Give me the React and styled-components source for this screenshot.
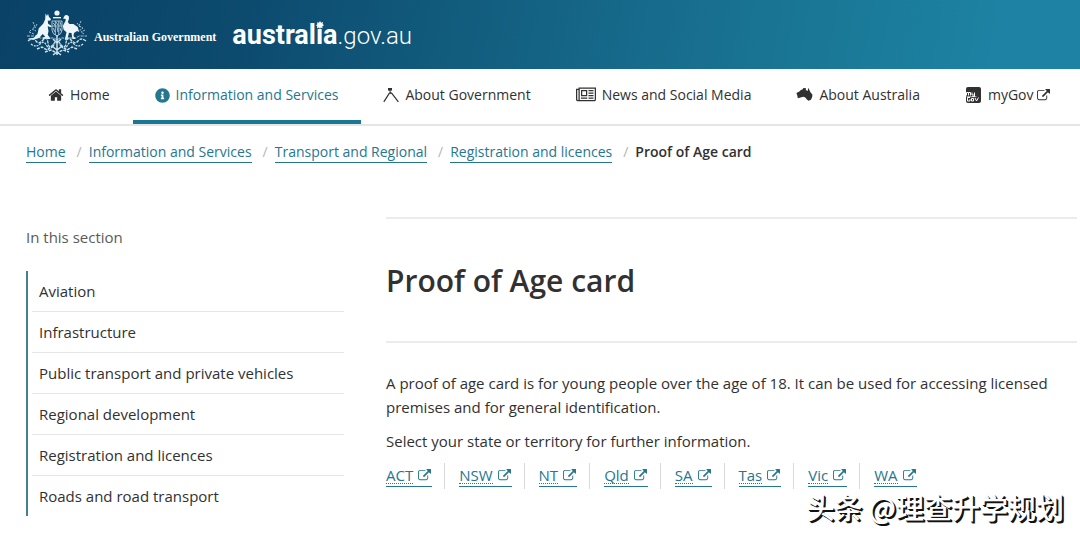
import styled, { createGlobalStyle } from "styled-components"
import { FaInfoCircle } from "react-icons/fa"

const GlobalStyle = createGlobalStyle`
  * {
    box-sizing: border-box;
  }
  body {
    margin: 0;
    background: #fff;
    color: #313131;
    font-family: "Open Sans", sans-serif;
    font-size: 15px;
    line-height: 24px;
  }
  a {
    color: inherit;
    text-decoration: none;
  }
  ul, ol {
    list-style: none;
    margin: 0;
    padding: 0;
  }
`

const Page = styled.div`
  position: relative;
  min-height: 100vh;
`

const Header = styled.header`
  display: flex;
  align-items: center;
  height: 69px;
  padding: 0 26px 4px;
  background: linear-gradient(100deg, #094266 0%, #0c4a6e 22%, #115a7c 40%, #176b8c 60%, #1a7896 76%, #1d82a3 92%);
`

const Crest = styled.a`
  display: flex;
  align-items: center;
  gap: 6px;
  margin-right: 16px;
  color: #fff;
  font: bold 12px/20px "Liberation Serif", serif;
`

const CrestName = styled.span`
  padding-top: 8px;
`

const Brand = styled.a`
  display: flex;
  align-items: baseline;
  padding-top: 6px;
  color: #fff;
  font: 700 27px/32px Roboto, sans-serif;
`

const BrandLight = styled.span`
  font-size: 24px;
  font-weight: 300;
`

const StarLetter = styled.span`
  position: relative;
`

const StarIcon = styled.svg`
  position: absolute;
  left: 0;
  top: 2px;
`

const Nav = styled.nav`
  border-bottom: 2px solid #e6e6e6;
  font-size: 14px;
  white-space: nowrap;
`

const NavList = styled.ul`
  display: flex;
  padding-left: 26px;
`

const NavLink = styled.a`
  display: flex;
  align-items: center;
  gap: 6px;
  height: 55px;
  padding: 1px 23px 0 22px;
  border-bottom: 4px solid ${props => props.$active ? "#1b7796" : "transparent"};
  color: ${props => props.$active ? "#24778f" : "#313131"};
`

const NavLabel = styled.span`
  display: flex;
  align-items: center;
  gap: 3px;
`

const Crumbs = styled.ol`
  display: flex;
  padding: 14px 26px;
  font-size: 14px;
`

const Crumb = styled.li`
  & + &::before {
    content: "/";
    padding: 0 7px 0 11px;
    color: #b5b5b5;
  }
`

const CrumbLink = styled.a`
  display: inline-block;
  line-height: 20px;
  border-bottom: 1px solid #24778f;
  color: #24778f;
`

const Current = styled.strong`
  font-weight: 600;
`

const Main = styled.div`
  display: grid;
  grid-template-columns: 318px minmax(0, 1fr);
  column-gap: 42px;
  padding: 39px 3px 0 26px;
`

const SideTitle = styled.h2`
  margin: 8px 0 22px;
  color: #5a5a5a;
  font-size: 15px;
  font-weight: 400;
  line-height: 24px;
`

const SideList = styled.ul`
  border-left: 2px solid #46808f;
  padding-left: 4px;
`

const SideItem = styled.li`
  & + & {
    border-top: 1px solid #e6e6e6;
  }
`

const SideLink = styled.a`
  display: block;
  padding: 8px 7px;
`

const Title = styled.h1`
  margin: 0 0 28px;
  padding: 42px 0 40px;
  border-top: 2px solid #ececec;
  border-bottom: 2px solid #ececec;
  font-size: 30px;
  font-weight: 600;
  line-height: 40px;
`

const Text = styled.p`
  margin: 0 0 10px;
`

const States = styled.ul`
  display: flex;
`

const State = styled.li`
  height: 26px;
  padding-right: 12px;
  & + & {
    padding-left: 14px;
    border-left: 1px solid #d9d9d9;
  }
`

const StateLink = styled.a`
  display: inline-flex;
  align-items: center;
  gap: 5px;
  height: 22px;
  padding-right: 1px;
  border-bottom: 1px solid #24778f;
  color: #24778f;
`

const Abbr = styled.abbr`
  line-height: 16px;
  border-bottom: 1px dotted #24778f;
  text-decoration: none;
`

const Watermark = styled.div`
  position: absolute;
  right: 16px;
  top: 487px;
  color: #fff;
  font: 500 28px/40px "Noto Sans CJK SC", sans-serif;
  text-shadow: 1px 1px 0 #111, 2px 2px 0 #111;
  white-space: nowrap;
`

const HomeIcon = () => (
  <svg width="16" height="16" viewBox="0 0 1792 1792" fill="currentColor">
    <path d="M1472 992v480q0 26-19 45t-45 19h-384v-384h-256v384h-384q-26 0-45-19t-19-45v-480q0-1 .5-3t.5-3l575-474 575 474q1 2 1 6zm223-69l-62 74q-8 9-21 11h-3q-13 0-21-7l-692-577-692 577q-12 8-24 7-13-2-21-11l-62-74q-8-10-7-23.5t11-21.5l719-599q32-26 76-26t76 26l244 204v-195q0-14 9-23t23-9h192q14 0 23 9t9 23v408l219 182q10 8 11 21.5t-7 23.5z" />
  </svg>
)

const GovernmentIcon = () => (
  <svg width="16" height="16" viewBox="0 0 16 16" fill="none" stroke="currentColor">
    <path d="M5 1h4v2.6H5z" fill="currentColor" stroke="none" />
    <path d="M6.7 2.5 7.5 6.5" strokeWidth="1" />
    <path d="M.8 14.8 6.4 6.2h2.2l6.8 8.6" strokeWidth="1.2" />
  </svg>
)

const NewsIcon = () => (
  <svg width="20" height="16" viewBox="0 128 2048 1536" fill="currentColor">
    <path d="M1024 512h-384v384h384v-384zm128 640v128h-640v-128h640zm0-768v640h-640v-640h640zm640 768v128h-512v-128h512zm0-256v128h-512v-128h512zm0-256v128h-512v-128h512zm0-256v128h-512v-128h512zm-1536 960v-960h-128v960q0 26 19 45t45 19 45-19 19-45zm1664 0v-1088h-1536v1088q0 33-11 64h1483q26 0 45-19t19-45zm128-1216v1216q0 80-56 136t-136 56h-1664q-80 0-136-56t-56-136v-1088h256v-128h1792z" />
  </svg>
)

const AustraliaIcon = () => (
  <svg width="17" height="16" viewBox="0 0 17 16" fill="currentColor">
    <path d="M.4 6 3.4 4.6 4.8 3 6.4 2.4 7.4 1.1 10 1.2 9.8 3 11.6 4 12.4.8 13.5 3.3 14.6 5.4 16.4 7.6 16.2 10 14.9 12.8 12.5 13.8 10.6 12.2 9.4 10.4 7.2 9.8 4.6 10.6 1.8 11.2 1.3 8.6z" />
  </svg>
)

const MyGovIcon = () => (
  <svg width="17" height="16" viewBox="0 0 17 16">
    <rect x="1" y="0" width="15" height="16" rx="2" fill="#313131" />
    <g fill="none" stroke="#fff" strokeWidth="1">
      <path d="M1.5 8.5v-3h2v3M3.5 5.5h2v3M7 5.5v2.5h2.5M9.5 5.5v4h-2" />
      <path d="M5 10.5H2.5v3.5H5v-2M6.5 11.5h2V14h-2zM10 11l1.5 3 2-3.5" />
      <path d="M1.5 9.7h10" strokeWidth=".7" />
    </g>
  </svg>
)

const ExternalIcon = () => (
  <svg width="13" height="13" viewBox="0 0 1792 1792" fill="currentColor">
    <path d="M1408 928v320q0 119-84.5 203.5t-203.5 84.5h-832q-119 0-203.5-84.5t-84.5-203.5v-832q0-119 84.5-203.5t203.5-84.5h704q14 0 23 9t9 23v64q0 14-9 23t-23 9h-704q-66 0-113 47t-47 113v832q0 66 47 113t113 47h832q66 0 113-47t47-113v-320q0-14 9-23t23-9h64q14 0 23 9t9 23zm384-864v512q0 26-19 45t-45 19-45-19l-176-176-652 652q-10 10-23 10t-23-10l-114-114q-10-10-10-23t10-23l652-652-176-176q-19-19-19-45t19-45 45-19h512q26 0 45 19t19 45z" />
  </svg>
)

const CoatOfArms = () => (
  <svg width="62" height="46" viewBox="0 0 62 46" fill="#eef6fa">
    <circle cx="31" cy="3" r="2.6" />
    <path d="M27 7h8v1.4h-8z" />
    {/* kangaroo */}
    <path d="M19.5 3.5 21 6l1-2.3 1 3.3 2 2-.6 1.4-2.6.4.3 3 3.5 2.2-.5 1.2-3.4-1 .8 5-.8 3.6 2.5 3.4-.5.8H17l-.5-1 2.7-1.5-2.6-2.4-3.4 3.8-5 1.7H2.5v-1l5.3-.8 3.7-4 1.3-5.5 4.4-4.5 2-4.5z" />
    {/* emu */}
    <path d="M37 8.5 39 5.3l2-.4 1.8 1.4.2 2.4-1.2 3.4 1.6 2 4-.2 4.3 3.2 1.5 5-2.2-1.2-3 2.2-.5 3 2.3 3h-3.4l-.9-6-2.5-.4-1.4 5.6 1 1.4h-3.8l1.7-7.4-2.8-2.6-.9-3.7 2.7-5 .3-2z" />
    <g fill="none" stroke="#cfe2ec" strokeWidth=".8">
      <path d="M26 11h10v9q0 4-5 6-5-2-5-6zM26 16h10M29.3 11v14M32.8 11v14" />
      <path d="M27 13l2 2M30 12l2 3M34 12l1 3M27 18l2 4M31 17l1 5M34 18l1 3" />
      <path d="M1 26h10l3 2h14l3 2 3-2h16l3-2h8" strokeDasharray="3 1" />
      <path d="M7 12l2 5-3 2 4 2M5 20l-2 2 5 2M11 14l-2 4M55 11l-2 5 4 2-4 3M59 20l-4 2 3 2M51 13l3 4" strokeDasharray="2 1" />
      <path d="M2 31q5-4 8 0t7-1 5 3 7-1M60 31q-5-4-8 0t-7-1-5 3-7-1" strokeWidth="1.3" strokeDasharray="3 1" />
      <path d="M5 34q5 4 9 0t7 2 8-3M57 34q-5 4-9 0t-7 2-8-3" strokeWidth="1.3" strokeDasharray="2 1" />
      <path d="M11 39l5-2 5 3 6-4M51 39l-5-2-5 3-6-4M19 42l6-2 6 3 6-3 6 2" strokeWidth="1.4" strokeDasharray="3 1" />
      <path d="M31 25v20M27 29l4 4 4-4M26 36l5 4 5-4M27 45l4-3 4 3" strokeWidth="1.5" />
    </g>
  </svg>
)

const navItems = [
  { label: "Home", icon: <HomeIcon /> },
  { label: "Information and Services", icon: <FaInfoCircle size={15} />, active: true },
  { label: "About Government", icon: <GovernmentIcon /> },
  { label: "News and Social Media", icon: <NewsIcon /> },
  { label: "About Australia", icon: <AustraliaIcon /> },
  { label: "myGov", icon: <MyGovIcon />, external: true },
]

const crumbs = ["Home", "Information and Services", "Transport and Regional", "Registration and licences"]

const sections = [
  "Aviation",
  "Infrastructure",
  "Public transport and private vehicles",
  "Regional development",
  "Registration and licences",
  "Roads and road transport",
]

const states = ["ACT", "NSW", "NT", "Qld", "SA", "Tas", "Vic", "WA"]

const App = () => {
  return (
    <Page>
      <GlobalStyle />
      <Header>
        <Crest href="#">
          <CoatOfArms />
          <CrestName>Australian Government</CrestName>
        </Crest>
        <Brand href="#">
          <span>
            austral
            <StarLetter>
              i
              <StarIcon width="8" height="8" viewBox="0 0 8 8" fill="#fff">
                <path d="M4 0l1 1.7L7 1l-.4 2L8 4.3 6.3 5.3l.2 2L4.8 6.6 4 8l-1-1.5-2 .7.3-2L0 4.2l1.5-1L1 1.2l2 .5z" />
              </StarIcon>
            </StarLetter>
            a
          </span>
          <BrandLight>.gov.au</BrandLight>
        </Brand>
      </Header>
      <Nav>
        <NavList>
          {navItems.map(item => (
            <li key={item.label}>
              <NavLink href="#" $active={item.active}>
                {item.icon}
                <NavLabel>
                  {item.label}
                  {item.external && <ExternalIcon />}
                </NavLabel>
              </NavLink>
            </li>
          ))}
        </NavList>
      </Nav>
      <Crumbs>
        {crumbs.map(crumb => (
          <Crumb key={crumb}>
            <CrumbLink href="#">{crumb}</CrumbLink>
          </Crumb>
        ))}
        <Crumb>
          <Current>Proof of Age card</Current>
        </Crumb>
      </Crumbs>
      <Main>
        <aside>
          <SideTitle>In this section</SideTitle>
          <SideList>
            {sections.map(section => (
              <SideItem key={section}>
                <SideLink href="#">{section}</SideLink>
              </SideItem>
            ))}
          </SideList>
        </aside>
        <main>
          <Title>Proof of Age card</Title>
          <Text>
            A proof of age card is for young people over the age of 18. It can be used for accessing licensed
            premises and for general identification.
          </Text>
          <Text>Select your state or territory for further information.</Text>
          <States>
            {states.map(state => (
              <State key={state}>
                <StateLink href="#">
                  <Abbr>{state}</Abbr>
                  <ExternalIcon />
                </StateLink>
              </State>
            ))}
          </States>
        </main>
      </Main>
      <Watermark>头条 @理查升学规划</Watermark>
    </Page>
  )
}

export default App
